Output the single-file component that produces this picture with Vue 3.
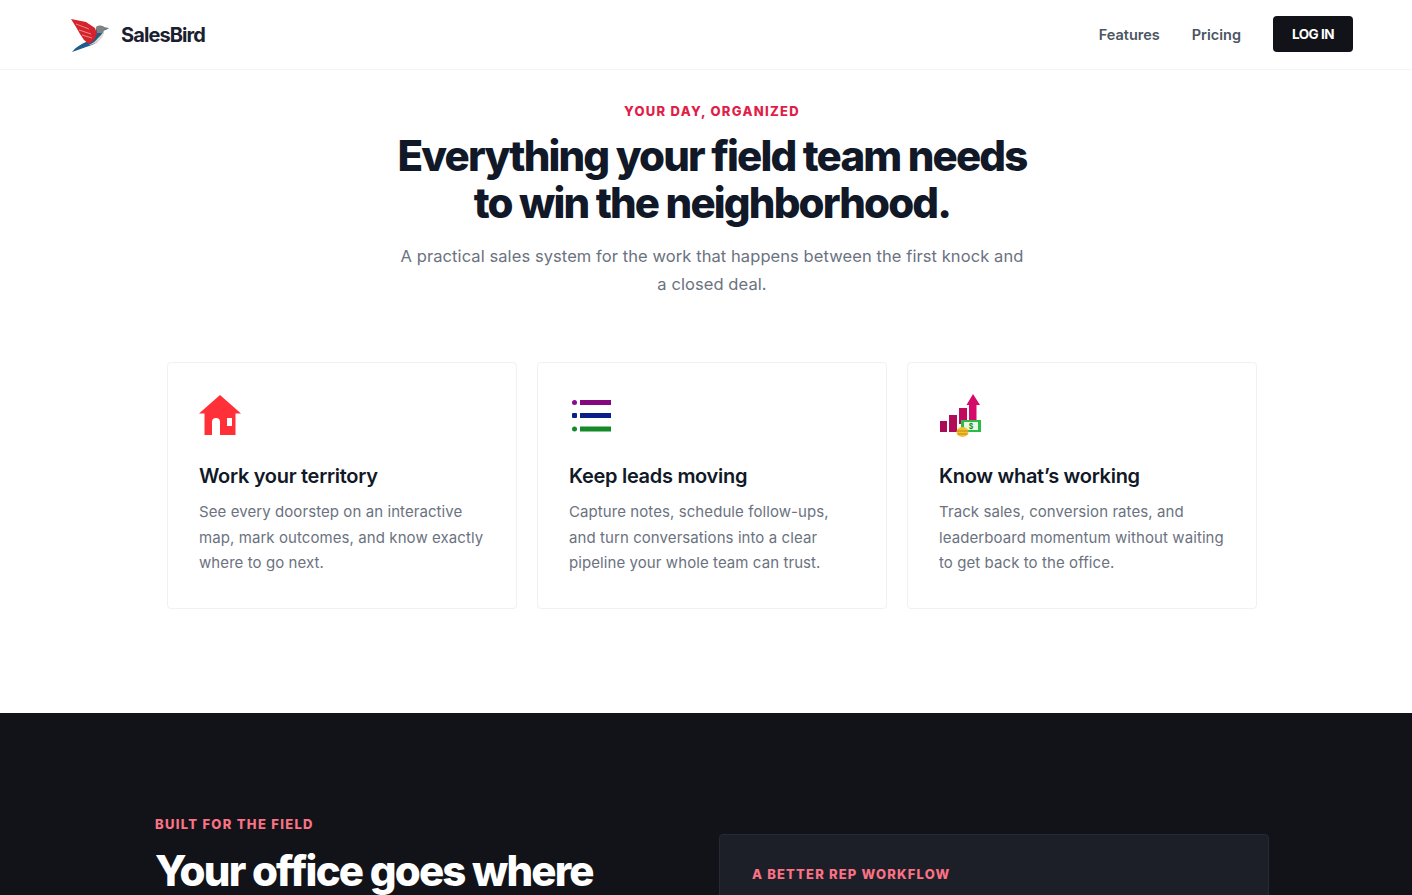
<script setup>
const cards = [
  { id: 'house', title: 'Work your territory', text: 'See every doorstep on an interactive map, mark outcomes, and know exactly where to go next.' },
  { id: 'list', title: 'Keep leads moving', text: 'Capture notes, schedule follow-ups, and turn conversations into a clear pipeline your whole team can trust.' },
  { id: 'chart', title: 'Know what’s working', text: 'Track sales, conversion rates, and leaderboard momentum without waiting to get back to the office.' }
]
</script>

<template>
  <div class="viewport">
    <div class="page">
      <header class="nav">
        <a class="brand">
          <svg class="bird" viewBox="0 0 40 36" width="40" height="36" aria-hidden="true">
            <path d="M25 12 C28 9 32 9 34 11 L38 11.5 L33 13.5 C32 21 26 27 18 29 C12 31 7 33 1 35 C5 30 10 27 15 25 C21 23 24 18 25 12 Z" fill="#1d5c8c" />
            <path d="M25 10 C27 8 31 8 33 10 L38 11 L33 13 L31 16 L26 16 Z" fill="#80827f" />
            <path d="M27 21 C30 18 32 16 33 13 C33 19 29 25 22 27 C20 28 18 28 18 28 C22 26 25 24 27 21 Z" fill="#e7dcc8" />
            <path d="M0 2 L15 5 L24 11 L26 17 L23 23 L18 27 L13 23 L9 17 L5 10 Z" fill="#d5232b" />
            <path d="M5 7 L18 12 M8 13 L20 17 M11 18 L21 21" stroke="#f4b5b5" stroke-width=".7" fill="none" />
          </svg>
          <span class="brand-name">SalesBird</span>
        </a>
        <nav class="links">
          <a>Features</a>
          <a>Pricing</a>
          <button class="login">LOG IN</button>
        </nav>
      </header>

      <section class="intro">
        <p class="eyebrow">YOUR DAY, ORGANIZED</p>
        <h1>Everything your field team needs<br />to win the neighborhood.</h1>
        <p class="lede">A practical sales system for the work that happens between the first knock and a closed deal.</p>

        <div class="cards">
          <article v-for="c in cards" :key="c.id" class="card">
            <div class="icon">
              <svg v-if="c.id === 'house'" viewBox="0 0 42 42" width="42" height="42" aria-hidden="true">
                <path d="M21 0 L42 18.5 L36.5 18.5 L36.5 40 L5.5 40 L5.5 18.5 L0 18.5 Z" fill="#ff3038" />
                <path d="M13 40 V27 a4 4 0 0 1 8 0 V40 Z" fill="#fff" />
                <rect x="28" y="23" width="5" height="8" fill="#fff" />
              </svg>
              <svg v-else-if="c.id === 'list'" viewBox="0 0 42 42" width="42" height="42" aria-hidden="true">
                <circle cx="5.5" cy="7.5" r="2.5" fill="#8a0a8a" />
                <rect x="11" y="5" width="31" height="5" fill="#85087f" />
                <rect x="3" y="18" width="5" height="5" rx="1" fill="#0b1f8a" />
                <rect x="11" y="18" width="31" height="5" fill="#0b1f8a" />
                <circle cx="5.5" cy="34" r="2.5" fill="#158a2a" />
                <rect x="11" y="31.5" width="31" height="5" fill="#158a2a" />
              </svg>
              <svg v-else viewBox="0 0 42 42" width="42" height="42" aria-hidden="true">
                <rect x="1" y="26" width="7" height="11" fill="#a80d55" />
                <rect x="10" y="20" width="8" height="17" fill="#b00c58" />
                <rect x="20" y="13" width="8" height="16" fill="#c00a5f" />
                <path d="M34 -1 L41 10 L37.5 10 L37.5 26 L30 26 L30 10 L27.5 10 Z" fill="#d60a6a" />
                <rect x="22" y="25" width="20" height="12" fill="#2dbb45" />
                <rect x="25" y="27" width="14" height="8" fill="#e6f9e4" />
                <text x="32" y="34" class="dollar">$</text>
                <ellipse cx="23.5" cy="37" rx="6" ry="5" fill="#f5c12e" />
                <path d="M18 36 h11 M18.5 39 h10" stroke="#b98a12" stroke-width="1" />
              </svg>
            </div>
            <h3>{{ c.title }}</h3>
            <p>{{ c.text }}</p>
          </article>
        </div>
      </section>

      <section class="dark">
        <div class="dark-grid">
          <div class="dark-copy">
            <p class="eyebrow pink">BUILT FOR THE FIELD</p>
            <h2>Your office goes where</h2>
          </div>
          <div class="panel">
            <p class="panel-label">A BETTER REP WORKFLOW</p>
          </div>
        </div>
      </section>
    </div>
  </div>
</template>

<style>
html, body { margin: 0; overflow: hidden; background: #fff; }
</style>

<style scoped>
.viewport { width: 1412px; height: 895px; overflow: hidden; }
.page { width: 1424px; font-family: Inter, "Liberation Sans", sans-serif; color: #111827; }
.nav { height: 70px; box-sizing: border-box; padding: 0 71px; display: flex; align-items: center; justify-content: space-between; border-bottom: 1px solid #f3f4f6; }
.brand { display: flex; align-items: center; gap: 10px; }
.bird { display: block; }
.brand-name { font-size: 20px; font-weight: 700; letter-spacing: -0.045em; color: #1a2030; }
.links { display: flex; align-items: center; }
.links a { font-size: 14.5px; font-weight: 600; color: #4b5563; margin-right: 32px; }
.login { height: 36px; width: 80px; padding: 0; background: #111318; color: #fff; border: 0; border-radius: 4px; font: 700 13.5px Inter, sans-serif; letter-spacing: -0.035em; margin-top: -1px; }
.intro { display: flex; flex-direction: column; align-items: center; padding-top: 33px; box-sizing: border-box; height: 643px; }
.eyebrow { margin: 0; font-size: 13px; line-height: 16px; font-weight: 800; letter-spacing: 0.1em; color: #e11d48; }
h1 { margin: 13px 0 0; font-size: 42px; line-height: 47px; font-weight: 800; letter-spacing: -0.044em; text-align: center; color: #111827; }
.lede { margin: 16px 0 0; width: 632px; font-size: 16.5px; line-height: 28px; letter-spacing: 0.08px; color: #6b7280; text-align: center; }
.cards { margin-top: 64px; width: 1090px; display: grid; grid-template-columns: repeat(3, 1fr); gap: 20px; }
.card { height: 247px; box-sizing: border-box; padding: 32px 31px; border: 1px solid #f0f1f3; border-radius: 4px; background: #fff; }
.icon { height: 42px; }
.icon svg { display: block; overflow: visible; }
.dollar { font: 700 7px Inter, sans-serif; fill: #158a2a; text-anchor: middle; }
h3 { margin: 25px 0 0; font-size: 20px; line-height: 28px; font-weight: 600; letter-spacing: -0.015em; color: #111827; }
.card p { margin: 9px 0 0; font-size: 15px; line-height: 25.5px; letter-spacing: 0.08px; color: #6b7280; }
.dark { background: #111318; height: 400px; padding: 103px 155px 0; box-sizing: border-box; }
.dark-grid { display: grid; grid-template-columns: 500px 550px; column-gap: 64px; align-items: start; }
.pink { color: #fb7185; }
h2 { margin: 15px 0 0; font-size: 42px; line-height: 47px; font-weight: 800; letter-spacing: -0.043em; color: #fff; }
.panel { margin-top: 18px; height: 300px; box-sizing: border-box; padding: 31px 32px; background: #1c1f28; border: 1px solid #262a36; border-radius: 4px; }
.panel-label { margin: 0; font-size: 13px; line-height: 16px; font-weight: 800; letter-spacing: 0.09em; color: #fb7185; }
</style>
